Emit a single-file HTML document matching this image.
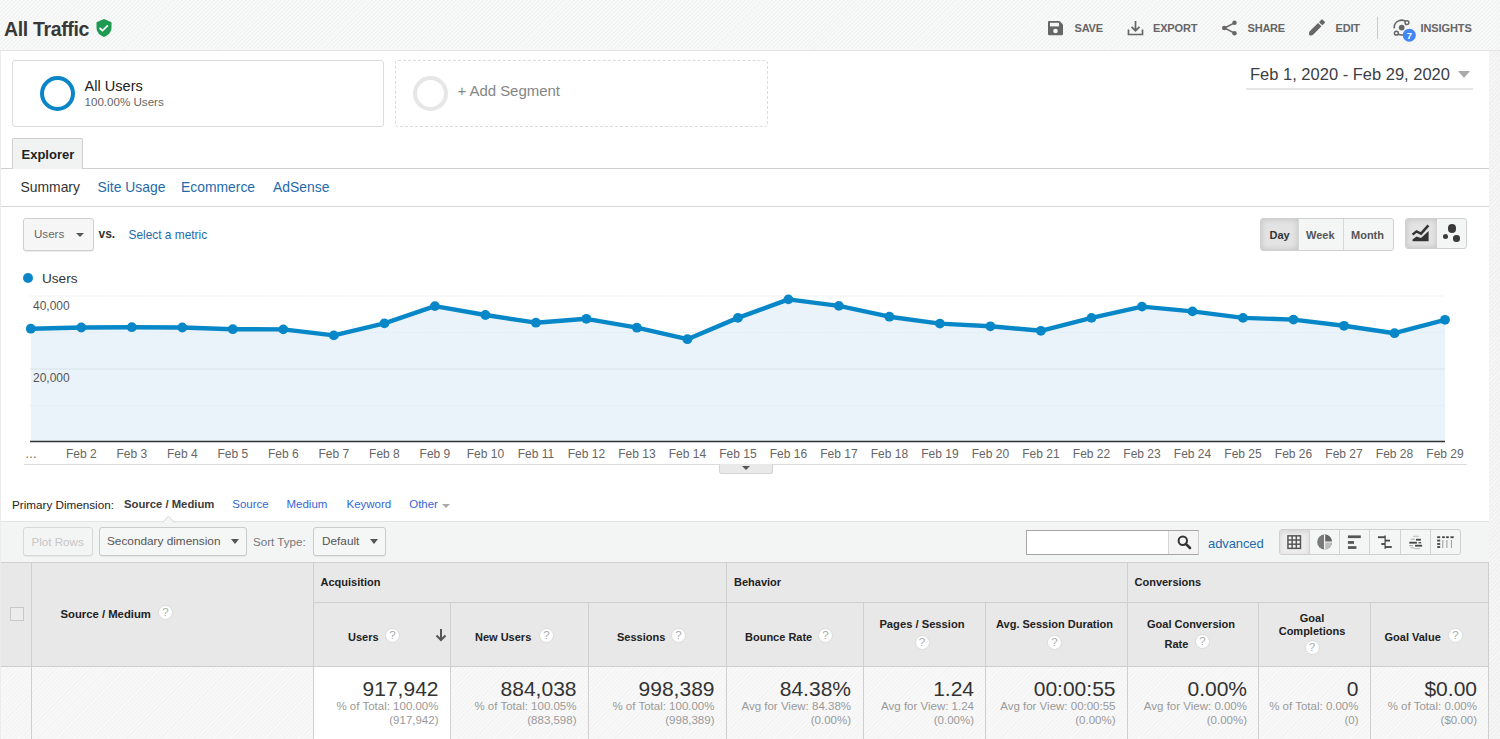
<!DOCTYPE html>
<html><head><meta charset="utf-8">
<style>
*{box-sizing:border-box;margin:0;padding:0}
html,body{width:1500px;height:739px;overflow:hidden}
body{position:relative;font-family:"Liberation Sans",sans-serif;color:#333;background:#f4f4f4}
.a{position:absolute;white-space:nowrap}
#hdr{left:0;top:0;width:1500px;height:51px;border-bottom:1px solid #e3e3e3;
 background:repeating-linear-gradient(-45deg,#f2f3f3 0 1.4px,#f9f9f9 1.4px 2.8px);}
#panel{left:1px;top:51px;width:1488px;height:688px;background:#fff}
.seg{border:1px solid #dcdcdc;border-radius:3px;background:#fff}
.btn{border:1px solid #ccc;border-radius:3px;background:#f5f5f5;box-shadow:0 1px 1px rgba(0,0,0,.06)}
.xl{top:446.8px;font-size:12px;color:#666;transform:translateX(-50%)}
.th{background:#e8e8e8}
.bd{position:absolute;background:#cfcfcf}
.hl{font-weight:700;color:#222}
.q{position:absolute;width:15px;height:15px;border-radius:50%;border:1px solid #dadada;background:#fff;color:#aaa;font-size:11.5px;text-align:center;line-height:13px;font-weight:400;font-family:"Liberation Sans",sans-serif}

</style></head><body>
<div id="hdr" class="a"></div>
<div id="panel" class="a"></div>
<div class="a " style="left:4px;top:17.9px;font-size:19.5px;font-weight:700;color:#383838;letter-spacing:-0.35px">All Traffic</div>
<svg class="a" style="left:95px;top:18px" width="18" height="20" viewBox="0 0 18 20">
<path d="M9 1 L16.5 4.2 V9.5 C16.5 14 13.2 17.6 9 19 C4.8 17.6 1.5 14 1.5 9.5 V4.2 Z" fill="#1e9a53"/>
<path d="M4.6 10 L7.5 12.6 L12.9 7.4" stroke="#fff" stroke-width="1.7" fill="none"/></svg>
<svg class="a" style="left:1047px;top:20px" width="17" height="16" viewBox="0 0 17 16">
<path d="M1 2.2 C1 1.5 1.5 1 2.2 1 H12.5 L16 4.5 V14 C16 14.6 15.5 15.2 14.8 15.2 H2.2 C1.5 15.2 1 14.6 1 14 Z" fill="#666"/>
<rect x="3" y="2.8" width="9" height="3.6" fill="#f6f7f7"/><circle cx="8.5" cy="11" r="2.3" fill="#f6f7f7"/></svg>
<div class="a " style="left:1074.5px;top:22.2px;font-size:11px;font-weight:700;color:#666;letter-spacing:-0.2px">SAVE</div>
<svg class="a" style="left:1127px;top:20px" width="17" height="16" viewBox="0 0 17 16">
<path d="M8.5 1 V10.5 M4.5 6.8 L8.5 10.7 L12.5 6.8" stroke="#666" stroke-width="1.7" fill="none"/>
<path d="M1.5 9.5 V14.5 H15.5 V9.5" stroke="#666" stroke-width="1.7" fill="none"/></svg>
<div class="a " style="left:1153px;top:22.2px;font-size:11px;font-weight:700;color:#666;letter-spacing:-0.15px">EXPORT</div>
<svg class="a" style="left:1221px;top:20px" width="17" height="16" viewBox="0 0 17 16">
<path d="M13.5 2.8 L3.5 8 L13.5 13.2" stroke="#666" stroke-width="1.5" fill="none"/>
<circle cx="13.5" cy="2.8" r="2.2" fill="#666"/><circle cx="3.3" cy="8" r="2.3" fill="#666"/><circle cx="13.5" cy="13.2" r="2.2" fill="#666"/></svg>
<div class="a " style="left:1247.5px;top:22.2px;font-size:11px;font-weight:700;color:#666;letter-spacing:-0.2px">SHARE</div>
<svg class="a" style="left:1306px;top:18px" width="21" height="21" viewBox="0 0 21 21">
<g transform="translate(10.5,9.9) rotate(-45)" fill="#666">
<path d="M-10.2,0 C-10.2,-1.2 -8,-2.4 -6.5,-2.4 H4.6 V2.4 H-6.5 C-8,2.4 -10.2,1.2 -10.2,0 Z"/>
<rect x="5.8" y="-2.4" width="4.4" height="4.8" rx="0.9"/></g></svg>
<div class="a " style="left:1335.5px;top:22.2px;font-size:11px;font-weight:700;color:#666;letter-spacing:-0.2px">EDIT</div>
<div class="a" style="left:1377px;top:17px;width:1px;height:22px;background:#ccc"></div>
<svg class="a" style="left:1392px;top:19px" width="26" height="24" viewBox="0 0 26 24">
<path d="M2.3,9.4 A7.4,7.4 0 0 1 15.1,3.6" stroke="#666" stroke-width="1.6" fill="none"/>
<path d="M4.65,14 A7.4,7.4 0 0 0 16.65,11.1" stroke="#666" stroke-width="1.6" fill="none"/>
<circle cx="9.7" cy="8.6" r="2.9" fill="#666"/>
<circle cx="15" cy="3.7" r="1.9" stroke="#666" stroke-width="1.5" fill="#f6f7f7"/>
<circle cx="4.4" cy="14.2" r="1.9" stroke="#666" stroke-width="1.5" fill="#f6f7f7"/>
<circle cx="17.3" cy="16.2" r="6.5" fill="#4285f4"/>
<text x="17.4" y="19.8" font-family="Liberation Sans" font-size="9.5" font-weight="700" fill="#fff" text-anchor="middle">7</text></svg>
<div class="a " style="left:1420.5px;top:22.2px;font-size:11px;font-weight:700;color:#666;letter-spacing:-0.1px">INSIGHTS</div>
<div class="a seg" style="left:12px;top:60px;width:372px;height:67px"></div>
<div class="a" style="left:39.5px;top:76px;width:35px;height:35px;border-radius:50%;border:4.2px solid #0a85c7"></div>
<div class="a " style="left:84.5px;top:77.5px;font-size:14.6px;color:#222;">All Users</div>
<div class="a " style="left:84.5px;top:95.4px;font-size:11.6px;color:#666;">100.00% Users</div>
<div class="a" style="left:395px;top:60px;width:373px;height:67px;border:1px dashed #dcdcdc;border-radius:3px"></div>
<div class="a" style="left:413px;top:75.5px;width:35px;height:35px;border-radius:50%;border:4px solid #e6e6e6"></div>
<div class="a " style="left:457.5px;top:81.9px;font-size:15px;color:#858585;letter-spacing:-0.05px">+ Add Segment</div>
<div class="a " style="left:1250px;top:64.8px;font-size:16.5px;color:#3c4043;">Feb 1, 2020 - Feb 29, 2020</div>
<div class="a" style="left:1458px;top:71px;width:0;height:0;border-left:6px solid transparent;border-right:6px solid transparent;border-top:7px solid #aaa"></div>
<div class="a" style="left:1246px;top:87.5px;width:227px;height:2px;background:#e6e6e6"></div>
<div class="a" style="left:1px;top:168px;width:1488px;height:1px;background:#cfcfcf"></div>
<div class="a" style="left:12px;top:138px;width:71px;height:31px;background:#f1f3f3;border:1px solid #cfcfcf;border-bottom:none;border-radius:2px 2px 0 0"></div>
<div class="a " style="left:21.5px;top:146.8px;font-size:13px;font-weight:700;color:#222;">Explorer</div>
<div class="a " style="left:20.5px;top:178.9px;font-size:13.9px;color:#333;">Summary</div>
<div class="a " style="left:97.5px;top:178.9px;font-size:13.9px;color:#1f6aab;">Site Usage</div>
<div class="a " style="left:181px;top:178.9px;font-size:13.9px;color:#1f6aab;">Ecommerce</div>
<div class="a " style="left:273px;top:178.9px;font-size:13.9px;color:#1f6aab;">AdSense</div>
<div class="a" style="left:1px;top:206px;width:1488px;height:1px;background:#d6d6d6"></div>
<div class="a btn" style="left:23px;top:218px;width:71px;height:33px;background:#f6f6f6;border-color:#cfcfcf;box-shadow:0 1px 1px rgba(0,0,0,.08)"></div>
<div class="a " style="left:34px;top:227.3px;font-size:11.6px;color:#666;">Users</div>
<div class="a" style="left:75.8px;top:232.5px;width:0;height:0;border-left:4.2px solid transparent;border-right:4.2px solid transparent;border-top:4.5px solid #555"></div>
<div class="a " style="left:98.5px;top:226.8px;font-size:12px;font-weight:700;color:#333;">vs.</div>
<div class="a " style="left:128.5px;top:227.5px;font-size:11.9px;color:#1f6aab;">Select a metric</div>
<div class="a" style="left:1260px;top:218px;width:134px;height:33px;border:1px solid #d0d0d0;border-radius:3px;background:#f4f5f5;overflow:hidden"><div class="a" style="left:0;top:0;width:37px;height:31px;background:#e3e3e3;box-shadow:inset 0 0 6px rgba(0,0,0,.16)"></div><div class="a" style="left:37px;top:0;width:1px;height:31px;background:#d8d8d8"></div><div class="a" style="left:82px;top:0;width:1px;height:31px;background:#d8d8d8"></div></div>
<div class="a " style="left:1269.5px;top:228.5px;font-size:11px;font-weight:700;color:#333;">Day</div>
<div class="a " style="left:1306px;top:228.5px;font-size:11px;font-weight:700;color:#555;">Week</div>
<div class="a " style="left:1351px;top:228.5px;font-size:11px;font-weight:700;color:#555;">Month</div>
<div class="a" style="left:1405px;top:218px;width:62px;height:31px;border:1px solid #d0d0d0;border-radius:3px;background:#f4f5f5;overflow:hidden"><div class="a" style="left:0;top:0;width:31px;height:29px;background:#e3e3e3;box-shadow:inset 0 0 6px rgba(0,0,0,.16)"></div></div>
<svg class="a" style="left:1410px;top:224px" width="22" height="20" viewBox="0 0 22 20">
<path d="M2.5,17.3 V15.6 L6.5,12.4 L11,13.9 L18.6,7 V17.3 Z" fill="#333"/>
<path d="M2.6,10.6 L6.5,7.4 L11,9.6 L18.4,1.4" stroke="#333" stroke-width="2.5" fill="none"/></svg>
<div class="a" style="left:1447.75px;top:224.25px;width:8.5px;height:8.5px;border-radius:50%;background:#3a3a3a"></div>
<div class="a" style="left:1442.8px;top:234.05px;width:5.4px;height:5.4px;border-radius:50%;background:#3a3a3a"></div>
<div class="a" style="left:1453.2px;top:234.95px;width:6.6px;height:6.6px;border-radius:50%;background:#3a3a3a"></div>
<div class="a" style="left:23px;top:272.5px;width:10px;height:10px;border-radius:50%;background:#0a85c7"></div>
<div class="a " style="left:42px;top:271.0px;font-size:13.6px;color:#333;">Users</div>
<svg class="a" style="left:0;top:0" width="1500" height="739" viewBox="0 0 1500 739">
<path d="M30.8,441.5 L30.8,328.7 L81.3,327.5 L131.8,327.2 L182.3,327.5 L232.8,329.2 L283.3,329.4 L333.8,335.4 L384.4,323.4 L434.9,306.1 L485.4,315 L535.9,322.7 L586.4,318.8 L636.9,327.7 L687.4,339.2 L737.9,317.9 L788.4,299.4 L838.9,305.9 L889.4,316.7 L939.9,323.6 L990.4,326.3 L1040.9,330.8 L1091.5,317.9 L1142.0,306.6 L1192.5,311.4 L1243.0,317.9 L1293.5,319.6 L1344.0,325.8 L1394.5,333.2 L1445.0,319.8 L1445,441.5 Z" fill="#e9f3f9"/>
<line x1="30" y1="296" x2="1445" y2="296" stroke="#e9e9e9" stroke-width="1" stroke-dasharray="1.5,1"/>
<line x1="30" y1="332.5" x2="1445" y2="332.5" stroke="#e2ecf4" stroke-width="1" stroke-dasharray="1.5,1"/>
<line x1="30" y1="369" x2="1445" y2="369" stroke="#d8e2ea" stroke-width="1"/>
<line x1="30" y1="405.5" x2="1445" y2="405.5" stroke="#e2ecf4" stroke-width="1" stroke-dasharray="1.5,1"/>
<line x1="30" y1="441.5" x2="1445" y2="441.5" stroke="#333" stroke-width="1.6"/>
<line x1="24" y1="464.5" x2="1467" y2="464.5" stroke="#dcdcdc" stroke-width="1"/>
<polyline points="30.8,328.7 81.3,327.5 131.8,327.2 182.3,327.5 232.8,329.2 283.3,329.4 333.8,335.4 384.4,323.4 434.9,306.1 485.4,315 535.9,322.7 586.4,318.8 636.9,327.7 687.4,339.2 737.9,317.9 788.4,299.4 838.9,305.9 889.4,316.7 939.9,323.6 990.4,326.3 1040.9,330.8 1091.5,317.9 1142.0,306.6 1192.5,311.4 1243.0,317.9 1293.5,319.6 1344.0,325.8 1394.5,333.2 1445.0,319.8" fill="none" stroke="#0787c8" stroke-width="4.4" stroke-linejoin="round"/>
<g fill="#0787c8"><circle cx="30.8" cy="328.7" r="4.9"/><circle cx="81.3" cy="327.5" r="4.9"/><circle cx="131.8" cy="327.2" r="4.9"/><circle cx="182.3" cy="327.5" r="4.9"/><circle cx="232.8" cy="329.2" r="4.9"/><circle cx="283.3" cy="329.4" r="4.9"/><circle cx="333.8" cy="335.4" r="4.9"/><circle cx="384.4" cy="323.4" r="4.9"/><circle cx="434.9" cy="306.1" r="4.9"/><circle cx="485.4" cy="315" r="4.9"/><circle cx="535.9" cy="322.7" r="4.9"/><circle cx="586.4" cy="318.8" r="4.9"/><circle cx="636.9" cy="327.7" r="4.9"/><circle cx="687.4" cy="339.2" r="4.9"/><circle cx="737.9" cy="317.9" r="4.9"/><circle cx="788.4" cy="299.4" r="4.9"/><circle cx="838.9" cy="305.9" r="4.9"/><circle cx="889.4" cy="316.7" r="4.9"/><circle cx="939.9" cy="323.6" r="4.9"/><circle cx="990.4" cy="326.3" r="4.9"/><circle cx="1040.9" cy="330.8" r="4.9"/><circle cx="1091.5" cy="317.9" r="4.9"/><circle cx="1142.0" cy="306.6" r="4.9"/><circle cx="1192.5" cy="311.4" r="4.9"/><circle cx="1243.0" cy="317.9" r="4.9"/><circle cx="1293.5" cy="319.6" r="4.9"/><circle cx="1344.0" cy="325.8" r="4.9"/><circle cx="1394.5" cy="333.2" r="4.9"/><circle cx="1445.0" cy="319.8" r="4.9"/></g>
</svg>
<div class="a " style="left:33px;top:299.1px;font-size:12px;color:#555;">40,000</div>
<div class="a " style="left:33px;top:370.8px;font-size:12px;color:#555;">20,000</div>
<div class="a " style="left:25px;top:446.8px;font-size:12px;color:#666;">…</div>
<div class="a xl" style="left:81.3px">Feb 2</div><div class="a xl" style="left:131.8px">Feb 3</div><div class="a xl" style="left:182.3px">Feb 4</div><div class="a xl" style="left:232.8px">Feb 5</div><div class="a xl" style="left:283.3px">Feb 6</div><div class="a xl" style="left:333.8px">Feb 7</div><div class="a xl" style="left:384.4px">Feb 8</div><div class="a xl" style="left:434.9px">Feb 9</div><div class="a xl" style="left:485.4px">Feb 10</div><div class="a xl" style="left:535.9px">Feb 11</div><div class="a xl" style="left:586.4px">Feb 12</div><div class="a xl" style="left:636.9px">Feb 13</div><div class="a xl" style="left:687.4px">Feb 14</div><div class="a xl" style="left:737.9px">Feb 15</div><div class="a xl" style="left:788.4px">Feb 16</div><div class="a xl" style="left:838.9px">Feb 17</div><div class="a xl" style="left:889.4px">Feb 18</div><div class="a xl" style="left:939.9px">Feb 19</div><div class="a xl" style="left:990.4px">Feb 20</div><div class="a xl" style="left:1040.9px">Feb 21</div><div class="a xl" style="left:1091.5px">Feb 22</div><div class="a xl" style="left:1142.0px">Feb 23</div><div class="a xl" style="left:1192.5px">Feb 24</div><div class="a xl" style="left:1243.0px">Feb 25</div><div class="a xl" style="left:1293.5px">Feb 26</div><div class="a xl" style="left:1344.0px">Feb 27</div><div class="a xl" style="left:1394.5px">Feb 28</div><div class="a xl" style="left:1445.0px">Feb 29</div>
<div class="a" style="left:719px;top:464px;width:54px;height:9.5px;background:#e9e9e9;border:1px solid #d4d4d4;border-top:none;border-radius:0 0 3px 3px"></div>
<div class="a" style="left:742px;top:466px;width:0;height:0;border-left:4px solid transparent;border-right:4px solid transparent;border-top:4.5px solid #555"></div>
<div class="a " style="left:12px;top:498.0px;font-size:11.7px;color:#222;">Primary Dimension:</div>
<div class="a " style="left:124px;top:498.4px;font-size:11.3px;font-weight:700;color:#3c3c3c;">Source / Medium</div>
<div class="a " style="left:232.3px;top:498.2px;font-size:11.5px;color:#3367d6;">Source</div>
<div class="a " style="left:286.5px;top:498.2px;font-size:11.5px;color:#3367d6;">Medium</div>
<div class="a " style="left:346.5px;top:498.2px;font-size:11.5px;color:#3367d6;">Keyword</div>
<div class="a " style="left:409.2px;top:498.2px;font-size:11.5px;color:#3367d6;">Other</div>
<div class="a" style="left:441.5px;top:504px;width:0;height:0;border-left:4px solid transparent;border-right:4px solid transparent;border-top:4px solid #aaa"></div>
<div class="a" style="left:1px;top:521px;width:1488px;height:41px;background:#f3f5f5;border-top:1px solid #e3e3e3"></div>
<svg class="a" style="left:161px;top:514px" width="16" height="9" viewBox="0 0 16 9"><path d="M1.5 8.5 L7.5 2.2 L13.5 8.5" fill="#f3f5f5" stroke="#d8d8d8" stroke-width="1"/></svg>
<div class="a btn" style="left:23px;top:527px;width:70px;height:29px;background:#f3f4f4;border-color:#d8d8d8"></div>
<div class="a " style="left:31.5px;top:534.5px;font-size:11.6px;color:#c6c6c6;">Plot Rows</div>
<div class="a btn" style="left:98.5px;top:527px;width:148px;height:29px;background:#f5f6f6;border-color:#cacaca"></div>
<div class="a " style="left:107px;top:534.3px;font-size:11.8px;color:#555;">Secondary dimension</div>
<div class="a" style="left:230.5px;top:539px;width:0;height:0;border-left:4.5px solid transparent;border-right:4.5px solid transparent;border-top:5px solid #555"></div>
<div class="a " style="left:253px;top:534.5px;font-size:11.6px;color:#777;">Sort Type:</div>
<div class="a btn" style="left:313px;top:527px;width:73px;height:29px;background:#f5f6f6;border-color:#cacaca"></div>
<div class="a " style="left:322px;top:534.3px;font-size:11.8px;color:#555;">Default</div>
<div class="a" style="left:369.5px;top:539px;width:0;height:0;border-left:4.5px solid transparent;border-right:4.5px solid transparent;border-top:5px solid #555"></div>
<div class="a" style="left:1026px;top:530px;width:173px;height:25px;background:#fff;border:1px solid #a6a6a6;border-right-color:#cfcfcf"></div>
<div class="a" style="left:1168px;top:531px;width:30px;height:23px;background:#f4f4f4;border-left:1px solid #d6d6d6"></div>
<svg class="a" style="left:1177px;top:534.5px" width="15" height="15" viewBox="0 0 15 15">
<circle cx="5.8" cy="5.8" r="4.2" stroke="#333" stroke-width="2" fill="none"/><path d="M8.8 8.8 L13 13" stroke="#333" stroke-width="2.6" stroke-linecap="round"/></svg>
<div class="a " style="left:1208px;top:535.5px;font-size:13px;color:#1f6aab;letter-spacing:-0.1px">advanced</div>
<div class="a" style="left:1279px;top:529px;width:182px;height:26px;border:1px solid #cfcfcf;border-radius:3px;background:#f4f5f5;overflow:hidden"><div class="a" style="left:0;top:0;width:29px;height:24px;background:#ececec;box-shadow:inset 0 2px 4px rgba(0,0,0,.10)"></div><div class="a" style="left:29px;top:0;width:1px;height:24px;background:#d2d2d2"></div><div class="a" style="left:59px;top:0;width:1px;height:24px;background:#d2d2d2"></div><div class="a" style="left:89px;top:0;width:1px;height:24px;background:#d2d2d2"></div><div class="a" style="left:120px;top:0;width:1px;height:24px;background:#d2d2d2"></div><div class="a" style="left:150px;top:0;width:1px;height:24px;background:#d2d2d2"></div></div>
<svg class="a" style="left:1279px;top:529px" width="182" height="26" viewBox="0 0 182 26">
<rect x="8.2" y="6.1" width="14" height="14" fill="#555"/>
<g fill="#f4f4f4"><rect x="9.70" y="7.60" width="2.67" height="2.67"/><rect x="9.70" y="11.77" width="2.67" height="2.67"/><rect x="9.70" y="15.94" width="2.67" height="2.67"/><rect x="13.87" y="7.60" width="2.67" height="2.67"/><rect x="13.87" y="11.77" width="2.67" height="2.67"/><rect x="13.87" y="15.94" width="2.67" height="2.67"/><rect x="18.04" y="7.60" width="2.67" height="2.67"/><rect x="18.04" y="11.77" width="2.67" height="2.67"/><rect x="18.04" y="15.94" width="2.67" height="2.67"/></g>
<circle cx="45.6" cy="13" r="7.4" fill="#7a7a7a"/>
<path d="M45.6 5.6 V13 H53 A7.4 7.4 0 0 0 45.6 5.6 Z" fill="#666"/>
<path d="M45.6 13 H53 A7.4 7.4 0 0 1 45.6 20.4 Z" fill="#bdbdbd"/>
<path d="M45.6 5.6 V20.4 M45.6 13 H53" stroke="#f4f4f4" stroke-width="1.2" fill="none"/>
<rect x="68.9" y="6.4" width="12.9" height="2.7" fill="#555"/><rect x="68.9" y="12.1" width="6.1" height="2.7" fill="#555"/><rect x="68.9" y="17.2" width="8.5" height="2.7" fill="#555"/>
<g fill="#444">
<rect x="99" y="7.3" width="7.3" height="1.8"/><rect x="105.5" y="6.4" width="1.2" height="13.5"/>
<rect x="106" y="10.7" width="5" height="1.8"/><rect x="102.3" y="14.1" width="3.7" height="1.8"/><rect x="106" y="17.1" width="6.8" height="1.8"/>
</g>
<rect x="134" y="6.8" width="5.8" height="0.8" fill="#aaa"/>
<rect x="131.8" y="9.7" width="4" height="1" fill="#aaa"/><rect x="137" y="9.8" width="4.9" height="1.8" fill="#444"/>
<rect x="130.3" y="12.8" width="7.6" height="1.8" fill="#444"/><rect x="139.5" y="13" width="2.7" height="1.4" fill="#555"/>
<rect x="130.3" y="16.2" width="3.7" height="1" fill="#999"/><rect x="136.1" y="15.8" width="7" height="1.8" fill="#444"/>
<rect x="131.5" y="18.5" width="3.8" height="0.8" fill="#aaa"/><rect x="135.2" y="19.3" width="5.8" height="0.8" fill="#aaa"/>
<g fill="#444">
<rect x="158.2" y="7.3" width="3" height="1.8"/><rect x="163.1" y="7.3" width="2.7" height="1.8"/><rect x="167.1" y="7.3" width="2.7" height="1.8"/><rect x="171.4" y="7.3" width="3.3" height="1.8"/>
<rect x="158.2" y="10.7" width="3" height="1.8"/><rect x="158.2" y="14.1" width="3" height="1.8"/><rect x="158.2" y="17.1" width="3" height="1.8"/>
</g>
<g fill="#999"><rect x="163.3" y="11" width="1" height="8"/><rect x="167.4" y="11" width="1" height="8"/><rect x="171.9" y="11" width="1" height="8"/></g>
</svg>
<div class="a th" style="left:1px;top:562px;width:1488px;height:104px;border-top:1px solid #d0d0d0"></div>
<div class="a" style="left:1px;top:666px;width:1488px;height:73px;background:repeating-linear-gradient(-45deg,#f4f4f4 0 1.5px,#f9f9f9 1.5px 3px);border-top:1px solid #cfcfcf"></div>
<div class="a" style="left:314px;top:667px;width:136px;height:72px;background:#fff"></div>
<div class="bd" style="left:31px;top:562px;width:1px;height:177px"></div>
<div class="bd" style="left:313px;top:562px;width:1px;height:177px"></div>
<div class="bd" style="left:726px;top:562px;width:1px;height:177px"></div>
<div class="bd" style="left:1127px;top:562px;width:1px;height:177px"></div>
<div class="bd" style="left:450px;top:602px;width:1px;height:137px"></div>
<div class="bd" style="left:588px;top:602px;width:1px;height:137px"></div>
<div class="bd" style="left:863px;top:602px;width:1px;height:137px"></div>
<div class="bd" style="left:985px;top:602px;width:1px;height:137px"></div>
<div class="bd" style="left:1258px;top:602px;width:1px;height:137px"></div>
<div class="bd" style="left:1370px;top:602px;width:1px;height:137px"></div>
<div class="bd" style="left:1488px;top:562px;width:1px;height:177px"></div>
<div class="bd" style="left:313px;top:602px;width:1175px;height:1px"></div>
<div class="a" style="left:10px;top:607px;width:14px;height:14px;border:1px solid #c8c8c8;background:#ececec"></div>
<div class="a hl" style="left:60.5px;top:607.8px;font-size:11.3px;">Source / Medium</div>
<div class="q" style="left:158.0px;top:605.2px">?</div>
<div class="a hl" style="left:320.5px;top:575.7px;font-size:11px;">Acquisition</div>
<div class="a hl" style="left:734px;top:575.7px;font-size:11px;">Behavior</div>
<div class="a hl" style="left:1134.5px;top:575.7px;font-size:11px;">Conversions</div>
<div class="a hl" style="left:348px;top:631.0px;font-size:11px;">Users</div>
<div class="q" style="left:385.0px;top:628.2px">?</div>
<svg class="a" style="left:435px;top:628px" width="12" height="14" viewBox="0 0 12 14"><path d="M6 1 V12 M1.5 7.5 L6 12 L10.5 7.5" stroke="#555" stroke-width="2" fill="none"/></svg>
<div class="a hl" style="left:475px;top:631.0px;font-size:11px;">New Users</div>
<div class="q" style="left:539.0px;top:628.2px">?</div>
<div class="a hl" style="left:617px;top:631.0px;font-size:11px;">Sessions</div>
<div class="q" style="left:671.0px;top:628.2px">?</div>
<div class="a hl" style="left:745px;top:631.0px;font-size:11px;">Bounce Rate</div>
<div class="q" style="left:818.0px;top:628.2px">?</div>
<div class="a hl" style="left:922px;top:618.1px;font-size:11.2px;transform:translateX(-50%);text-align:center;">Pages / Session</div>
<div class="q" style="left:914.5px;top:634.7px">?</div>
<div class="a hl" style="left:1054.5px;top:618.2px;font-size:11px;transform:translateX(-50%);text-align:center;">Avg. Session Duration</div>
<div class="q" style="left:1047.0px;top:634.7px">?</div>
<div class="a hl" style="left:1191px;top:618.2px;font-size:11px;transform:translateX(-50%);text-align:center;">Goal Conversion</div>
<div class="a hl" style="left:1164.5px;top:637.5px;font-size:11px;">Rate</div>
<div class="q" style="left:1195.0px;top:634.2px">?</div>
<div class="a hl" style="left:1312px;top:611.5px;font-size:11px;transform:translateX(-50%);text-align:center;">Goal</div>
<div class="a hl" style="left:1312px;top:624.5px;font-size:11px;transform:translateX(-50%);text-align:center;">Completions</div>
<div class="q" style="left:1304.5px;top:640.2px">?</div>
<div class="a hl" style="left:1384.5px;top:631.0px;font-size:11px;">Goal Value</div>
<div class="q" style="left:1448.0px;top:628.2px">?</div>
<div class="a " style="right:1061.5px;top:677.1px;font-size:21px;text-align:right;color:#333;">917,942</div>
<div class="a " style="right:1061.5px;top:700.4px;font-size:11.5px;text-align:right;color:#999;">% of Total: 100.00%</div>
<div class="a " style="right:1061.5px;top:713.9px;font-size:11.5px;text-align:right;color:#999;">(917,942)</div>
<div class="a " style="right:923.5px;top:677.1px;font-size:21px;text-align:right;color:#333;">884,038</div>
<div class="a " style="right:923.5px;top:700.4px;font-size:11.5px;text-align:right;color:#999;">% of Total: 100.05%</div>
<div class="a " style="right:923.5px;top:713.9px;font-size:11.5px;text-align:right;color:#999;">(883,598)</div>
<div class="a " style="right:785.5px;top:677.1px;font-size:21px;text-align:right;color:#333;">998,389</div>
<div class="a " style="right:785.5px;top:700.4px;font-size:11.5px;text-align:right;color:#999;">% of Total: 100.00%</div>
<div class="a " style="right:785.5px;top:713.9px;font-size:11.5px;text-align:right;color:#999;">(998,389)</div>
<div class="a " style="right:649px;top:677.1px;font-size:21px;text-align:right;color:#333;">84.38%</div>
<div class="a " style="right:649px;top:700.4px;font-size:11.5px;text-align:right;color:#999;">Avg for View: 84.38%</div>
<div class="a " style="right:649px;top:713.9px;font-size:11.5px;text-align:right;color:#999;">(0.00%)</div>
<div class="a " style="right:526px;top:677.1px;font-size:21px;text-align:right;color:#333;">1.24</div>
<div class="a " style="right:526px;top:700.4px;font-size:11.5px;text-align:right;color:#999;">Avg for View: 1.24</div>
<div class="a " style="right:526px;top:713.9px;font-size:11.5px;text-align:right;color:#999;">(0.00%)</div>
<div class="a " style="right:384.5px;top:677.1px;font-size:21px;text-align:right;color:#333;">00:00:55</div>
<div class="a " style="right:384.5px;top:700.4px;font-size:11.5px;text-align:right;color:#999;">Avg for View: 00:00:55</div>
<div class="a " style="right:384.5px;top:713.9px;font-size:11.5px;text-align:right;color:#999;">(0.00%)</div>
<div class="a " style="right:253px;top:677.1px;font-size:21px;text-align:right;color:#333;">0.00%</div>
<div class="a " style="right:253px;top:700.4px;font-size:11.5px;text-align:right;color:#999;">Avg for View: 0.00%</div>
<div class="a " style="right:253px;top:713.9px;font-size:11.5px;text-align:right;color:#999;">(0.00%)</div>
<div class="a " style="right:141.5px;top:677.1px;font-size:21px;text-align:right;color:#333;">0</div>
<div class="a " style="right:141.5px;top:700.4px;font-size:11.5px;text-align:right;color:#999;">% of Total: 0.00%</div>
<div class="a " style="right:141.5px;top:713.9px;font-size:11.5px;text-align:right;color:#999;">(0)</div>
<div class="a " style="right:23px;top:677.1px;font-size:21px;text-align:right;color:#333;">$0.00</div>
<div class="a " style="right:23px;top:700.4px;font-size:11.5px;text-align:right;color:#999;">% of Total: 0.00%</div>
<div class="a " style="right:23px;top:713.9px;font-size:11.5px;text-align:right;color:#999;">($0.00)</div>
<div class="a" style="left:1489px;top:51px;width:11px;height:688px;background:repeating-linear-gradient(-45deg,#f0f0f0 0 1.5px,#f6f6f6 1.5px 3px)"></div>
<div class="a" style="left:0;top:51px;width:1px;height:688px;background:#ececec"></div>
</body></html>
